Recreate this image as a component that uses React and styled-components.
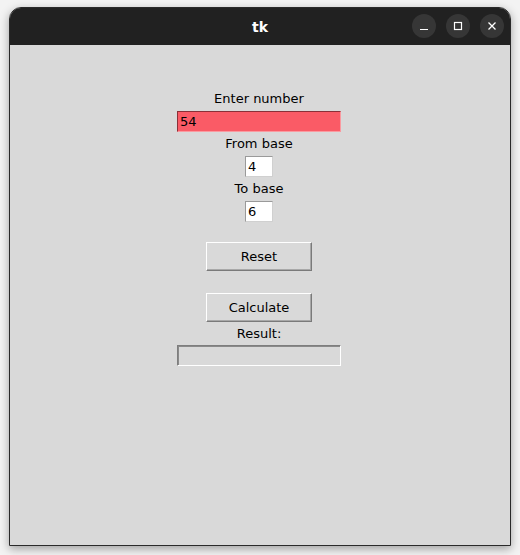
import * as React from "react"
import styled, { createGlobalStyle } from "styled-components"

const GlobalStyle = createGlobalStyle`
    html, body {
        margin: 0;
        padding: 0;
        background: #f3f3f3;
    }
    #root {
        padding: 7px 9px 9px 9px;
    }
`

const Window = styled.div`
    width: 502px;
    height: 539px;
    box-sizing: border-box;
    border: 1px solid #2a2a2a;
    border-radius: 12px 12px 0 0;
    overflow: hidden;
    display: flex;
    flex-direction: column;
    box-shadow: 0 3px 10px rgba(0, 0, 0, 0.35);
    font-family: "DejaVu Sans", "Liberation Sans", sans-serif;
`

const TitleBar = styled.header`
    height: 37px;
    flex-shrink: 0;
    background: #212121;
    position: relative;
    display: flex;
    align-items: center;
    justify-content: center;
`

const Title = styled.h1`
    margin: 0;
    color: #ffffff;
    font-size: 14px;
    font-weight: bold;
    padding-top: 1px;
`

const Controls = styled.div`
    position: absolute;
    right: 6px;
    top: 6px;
    display: flex;
    gap: 10px;
`

const ControlButton = styled.button`
    width: 24px;
    height: 24px;
    border: none;
    border-radius: 50%;
    background: #363636;
    padding: 0;
    display: flex;
    align-items: center;
    justify-content: center;

    svg {
        stroke: #ffffff;
        fill: none;
    }
`

const Body = styled.main`
    flex: 1;
    background: #d9d9d9;
    display: flex;
    flex-direction: column;
    align-items: center;
    padding: 42px 2px 0 0;
`

const Label = styled.div`
    height: ${props => props.h || 24}px;
    line-height: ${props => props.h || 24}px;
    font-size: 13px;
    color: #000000;
`

const Entry = styled.input`
    box-sizing: border-box;
    width: ${props => props.w}px;
    height: 21px;
    margin: 0;
    padding: 0 0 0 2px;
    font-family: inherit;
    font-size: 13px;
    color: #000000;
    outline: none;
    background: ${props => props.bg || "#ffffff"};
    border-style: solid;
    border-width: 1px;
    border-color: ${props =>
        props.bg === "#fa5b66"
            ? "#8a3038 #fa9aa0 #fa9aa0 #8a3038"
            : props.bg === "#d9d9d9"
            ? "#7e7e7e #ffffff #ffffff #7e7e7e"
            : "#9a9a9a #d0d0d0 #d0d0d0 #9a9a9a"};
    box-shadow: ${props =>
        props.bg === "#d9d9d9" ? "inset 1px 1px 0 #8a8a8a" : "none"};
`

const Button = styled.button`
    box-sizing: border-box;
    width: 106px;
    height: 29px;
    margin-top: ${props => props.mt}px;
    padding: 0;
    background: #d9d9d9;
    font-family: inherit;
    font-size: 13px;
    color: #000000;
    border-style: solid;
    border-width: 1px;
    border-color: #ffffff #7a7a7a #7a7a7a #ffffff;
    box-shadow: inset -1px -1px 0 #a8a8a8;
`

const App = () => {
    const [number, setNumber] = React.useState("54")
    const [from, setFrom] = React.useState("4")
    const [to, setTo] = React.useState("6")

    return (
        <>
            <GlobalStyle />
            <Window>
                <TitleBar>
                    <Title>tk</Title>
                    <Controls>
                        <ControlButton aria-label="minimize">
                            <svg width="10" height="10" viewBox="0 0 10 10">
                                <path d="M1 8.5h8" strokeWidth="1.2" />
                            </svg>
                        </ControlButton>
                        <ControlButton aria-label="maximize">
                            <svg width="10" height="10" viewBox="0 0 10 10">
                                <rect x="1.5" y="1.5" width="7" height="7" strokeWidth="1.2" />
                            </svg>
                        </ControlButton>
                        <ControlButton aria-label="close">
                            <svg width="10" height="10" viewBox="0 0 10 10">
                                <path d="M1.5 1.5l7 7M8.5 1.5l-7 7" strokeWidth="1.3" />
                            </svg>
                        </ControlButton>
                    </Controls>
                </TitleBar>

                <Body>
                    <Label>Enter number</Label>
                    <Entry w={164} bg="#fa5b66" value={number} onChange={e => setNumber(e.target.value)} />
                    <Label>From base</Label>
                    <Entry w={28} value={from} onChange={e => setFrom(e.target.value)} />
                    <Label>To base</Label>
                    <Entry w={28} value={to} onChange={e => setTo(e.target.value)} />

                    <Button mt={20}>Reset</Button>
                    <Button mt={22}>Calculate</Button>

                    <Label h={23}>Result:</Label>
                    <Entry w={164} bg="#d9d9d9" readOnly value="" />
                </Body>
            </Window>
        </>
    )
}

export default App
